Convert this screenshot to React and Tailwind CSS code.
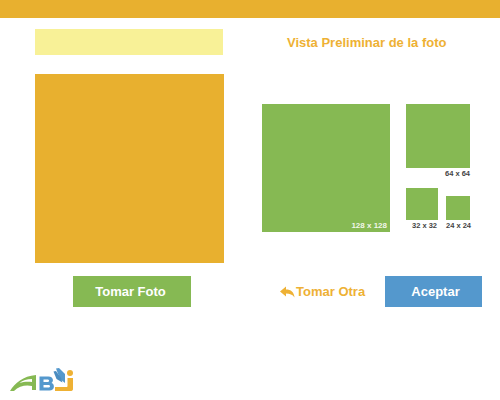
function Preview({ size, label, light, labelClass }) {
  return (
    <div className="relative bg-[#86b953]" style={{ width: size, height: size }}>
      {light ? (
        <span className="absolute right-[3px] bottom-[2px] whitespace-nowrap text-[8px] leading-[9px] font-bold text-[#f1f6ea]">
          {label}
        </span>
      ) : (
        <span className={`absolute top-full mt-[1px] whitespace-nowrap text-[7.5px] leading-[9px] font-bold text-[#444444] ${labelClass}`}>
          {label}
        </span>
      )}
    </div>
  );
}

function Logo() {
  return (
    <svg width="75" height="30" viewBox="5 365 75 30" className="block">
      <path d="M10 391 C15 383 23 376 36 375 L36 390 L32 390 L32 386 C26 384.5 19 386 14 391 Z M19.5 383 C24 381.5 28 381.5 32 382 L32 379 C27 379 22.5 380.5 19.5 383 Z" fill="#86b953" fillRule="evenodd" />
      <path d="M39.5 376.5 L48.5 376.5 C53.5 376.5 54 381.5 51.5 383 C55 384 55 390.5 49.5 390.5 L39.5 390.5 Z M43.5 379.5 L43.5 382 L48 382 C49.5 382 49.5 379.5 48 379.5 Z M43.5 385 L43.5 387.5 L48.5 387.5 C50.5 387.5 50.5 385 48.5 385 Z" fill="#5498cd" fillRule="evenodd" />
      <path d="M56 368.5 L59 368 L65 374 L65 383 L60 379 Z" fill="#5498cd" />
      <path d="M53.5 371.5 L56 371 L61 378 L62.5 382.5 L56.5 379 Z" fill="#4a8cc0" />
      <circle cx="70" cy="373" r="3" fill="#eeb134" />
      <path d="M67.5 378 L73 378 L73 389 C73 390.5 72 391 70.5 391 L55 391 L55 387 L66.5 387 C67.2 387 67.5 386.5 67.5 386 Z" fill="#eeb134" />
    </svg>
  );
}

export default function App() {
  return (
    <div className="w-[500px] h-[400px] bg-white flex flex-col overflow-hidden font-['Liberation_Sans',Arial,sans-serif]">
      <div className="h-[18px] shrink-0 bg-[#e8b02f]" />
      <div className="flex pl-[35px]">
        <div className="w-[189px] pt-[11px] flex flex-col">
          <div className="w-[188px] h-[26px] bg-[#f8f197]" />
          <div className="mt-[19px] w-[189px] h-[189px] bg-[#e8b02f]" />
          <button className="mt-[13px] ml-[38px] w-[118px] h-[31px] pr-[3px] bg-[#86b953] text-white text-[13px] font-bold flex items-center justify-center">
            Tomar Foto
          </button>
        </div>
        <div className="ml-[38px] w-[220px] flex flex-col">
          <h2 className="mt-[17px] ml-[25px] h-[16px] text-[13px] leading-[16px] font-bold text-[#eeb134] whitespace-nowrap">
            Vista Preliminar de la foto
          </h2>
          <div className="mt-[53px] flex gap-[16px]">
            <Preview size={128} label="128 x 128" light />
            <div className="w-[64px] flex flex-col">
              <Preview size={64} label="64 x 64" labelClass="right-0" />
              <div className="mt-[20px] flex items-end justify-between">
                <Preview size={32} label="32 x 32" labelClass="right-[1px]" />
                <Preview size={24} label="24 x 24" labelClass="right-[-1px]" />
              </div>
            </div>
          </div>
          <div className="mt-[44px] flex items-center">
            <button className="ml-[18px] w-[105px] flex items-center text-[#eeb134] text-[13px] font-bold whitespace-nowrap">
              <svg width="15" height="12" viewBox="0 0 15 12" className="shrink-0">
                <path d="M0 5.5 L6 0.5 L6 3.5 C11 3.5 14 6 14.5 11.5 C12.5 8.5 10 7.5 6 7.5 L6 10.5 Z" fill="#eeb134" />
              </svg>
              <span className="ml-[1px]">Tomar Otra</span>
            </button>
            <button className="w-[97px] h-[31px] pl-[4px] bg-[#5498cd] text-white text-[13px] font-bold flex items-center justify-center">
              Aceptar
            </button>
          </div>
        </div>
      </div>
      <div className="mt-[58px] ml-[5px]">
        <Logo />
      </div>
    </div>
  );
}
